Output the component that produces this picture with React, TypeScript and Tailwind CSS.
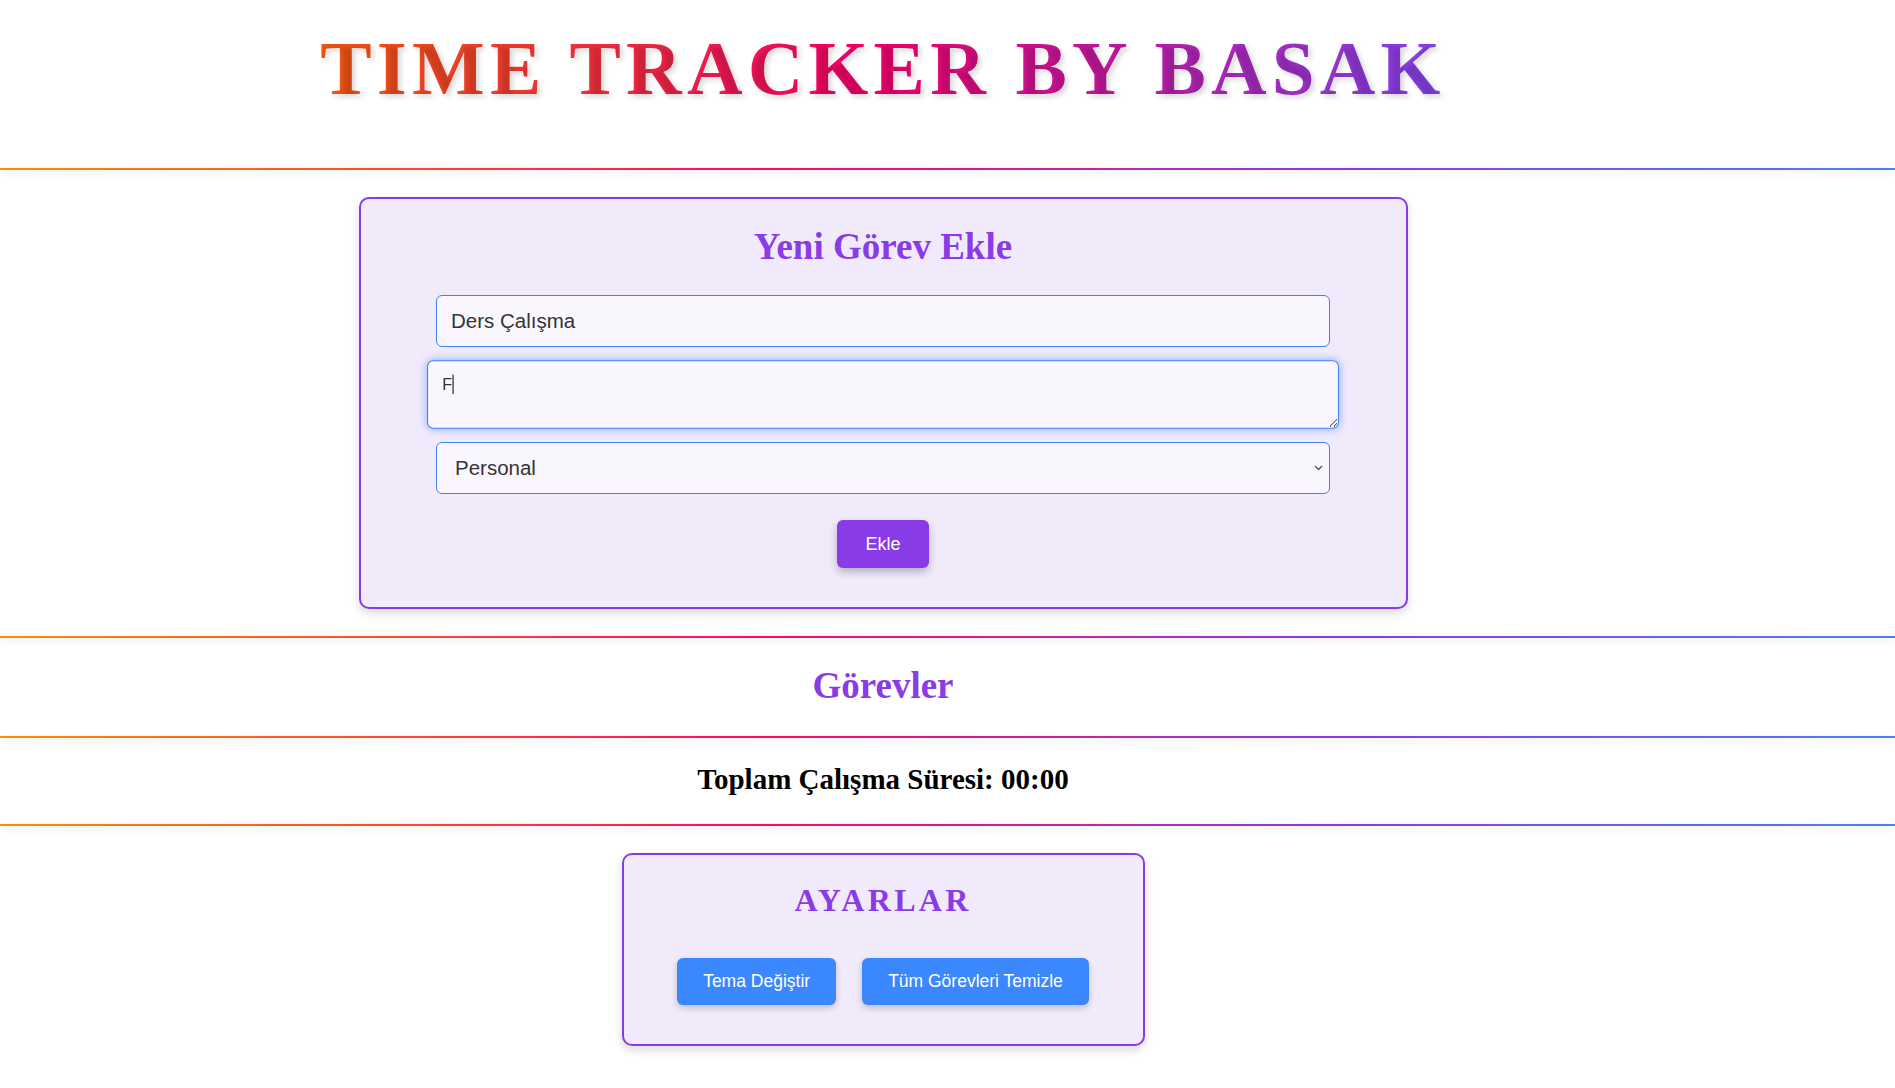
import { useEffect, useRef } from "react";

const Line = () => (
  <div className="h-[2px] w-full bg-[linear-gradient(90deg,#ff8c00_0%,#ff0a60_40%,#8a3be8_72%,#4a80f5_100%)] shadow-[0_3px_6px_rgba(0,0,0,0.12)]" />
);

const TaskForm = () => {
  const noteRef = useRef<HTMLTextAreaElement>(null);

  useEffect(() => {
    const el = noteRef.current;
    if (el) {
      el.focus();
      el.setSelectionRange(1, 1);
    }
  }, []);

  return (
    <div className="mx-auto flex w-[1049px] flex-col items-center rounded-[10px] border-2 border-[#8a3be8] bg-[#f1eafb] pt-[26px] pb-[39px] shadow-[0_4px_10px_rgba(0,0,0,0.15)]">
      <h2 className="h-[44px] font-['Liberation_Serif',serif] text-[37px] leading-[44px] font-bold text-[#8a3be8]">
        Yeni Görev Ekle
      </h2>

      <input
        type="text"
        defaultValue="Ders Çalışma"
        className="mt-[26px] h-[52px] w-[894px] rounded-[6px] border border-[#3b82f6] bg-[#f9f7fd] px-[14px] font-['Liberation_Sans',sans-serif] text-[20.5px] text-[#333] outline-none"
      />

      {/* focused textarea, grows a little */}
      <div className="relative mt-[14px] h-[67px] w-[894px] scale-[1.02]">
        <textarea
          ref={noteRef}
          defaultValue="F"
          className="h-full w-full rounded-[6px] border border-[#3b82f6] bg-[#f9f7fd] px-[14px] py-[14px] font-['Liberation_Sans',sans-serif] text-[16px] leading-[18px] text-[#333] caret-transparent shadow-[0_0_8px_rgba(59,130,246,0.6)] outline-none"
        />
        <span className="pointer-events-none absolute top-[14px] left-[25px] h-[19px] w-px bg-black" />
      </div>

      <div className="relative mt-[14px] w-[894px]">
        <select
          defaultValue="Personal"
          className="h-[52px] w-full appearance-none rounded-[6px] border border-[#3b82f6] bg-[#f9f7fd] pr-[30px] pl-[18px] font-['Liberation_Sans',sans-serif] text-[20.5px] text-[#333] outline-none"
        >
          <option>Personal</option>
          <option>Work</option>
          <option>Study</option>
        </select>
        <svg
          className="pointer-events-none absolute top-[23px] right-[7px] h-[6px] w-[9px]"
          viewBox="0 0 9 6"
          fill="none"
          stroke="#555"
          strokeWidth="1.4"
        >
          <path d="M1 1l3.5 3.5L8 1" />
        </svg>
      </div>

      <button className="mt-[26px] h-[48px] rounded-[6px] bg-[#8a3be8] px-[28px] font-['Liberation_Sans',sans-serif] text-[18px] text-white shadow-[0_4px_8px_rgba(0,0,0,0.25)]">
        Ekle
      </button>
    </div>
  );
};

const Settings = () => (
  <div className="mx-auto flex w-[523px] flex-col items-center rounded-[10px] border-2 border-[#8a3be8] bg-[#f1eafb] pt-[26px] pb-[39px] shadow-[0_4px_10px_rgba(0,0,0,0.15)]">
    <h2 className="h-[38px] font-['Liberation_Serif',serif] text-[32px] leading-[38px] font-bold tracking-[3.3px] text-[#8a3be8]">
      AYARLAR
    </h2>
    <div className="mt-[39px] flex gap-[26px]">
      <button className="h-[47px] rounded-[6px] bg-[#3b87fd] px-[26px] font-['Liberation_Sans',sans-serif] text-[17.5px] text-white shadow-[0_3px_6px_rgba(0,0,0,0.2)]">
        Tema Değiştir
      </button>
      <button className="h-[47px] rounded-[6px] bg-[#3b87fd] px-[26px] font-['Liberation_Sans',sans-serif] text-[17.5px] text-white shadow-[0_3px_6px_rgba(0,0,0,0.2)]">
        Tüm Görevleri Temizle
      </button>
    </div>
  </div>
);

export default function App() {
  return (
    <div className="min-h-screen bg-white">
      <header className="flex w-[1766px] justify-center pt-[30px] pb-[61px]">
        <h1 className="bg-[linear-gradient(90deg,#f25812_0%,#f2303e_25%,#f5006a_48%,#c01ca8_72%,#8444ee_100%)] bg-clip-text font-['Liberation_Serif',serif] text-[77px] leading-[77px] font-bold tracking-[5.2px] text-transparent [text-shadow:3px_3px_5px_rgba(0,0,0,0.16)]">
          TIME TRACKER BY BASAK
        </h1>
      </header>

      <Line />

      <section className="w-[1766px] py-[27px]">
        <TaskForm />
      </section>

      <Line />

      <section className="w-[1766px] pt-[26px] pb-[28px] text-center">
        <h2 className="h-[44px] font-['Liberation_Serif',serif] text-[37px] leading-[44px] font-bold text-[#8a3be8]">
          Görevler
        </h2>
      </section>

      <Line />

      <section className="w-[1766px] pt-[24px] pb-[28px] text-center">
        <h3 className="h-[34px] font-['Liberation_Serif',serif] text-[29px] leading-[34px] font-bold text-black">
          Toplam Çalışma Süresi: 00:00
        </h3>
      </section>

      <Line />

      <section className="w-[1766px] pt-[27px] pb-[30px]">
        <Settings />
      </section>
    </div>
  );
}
